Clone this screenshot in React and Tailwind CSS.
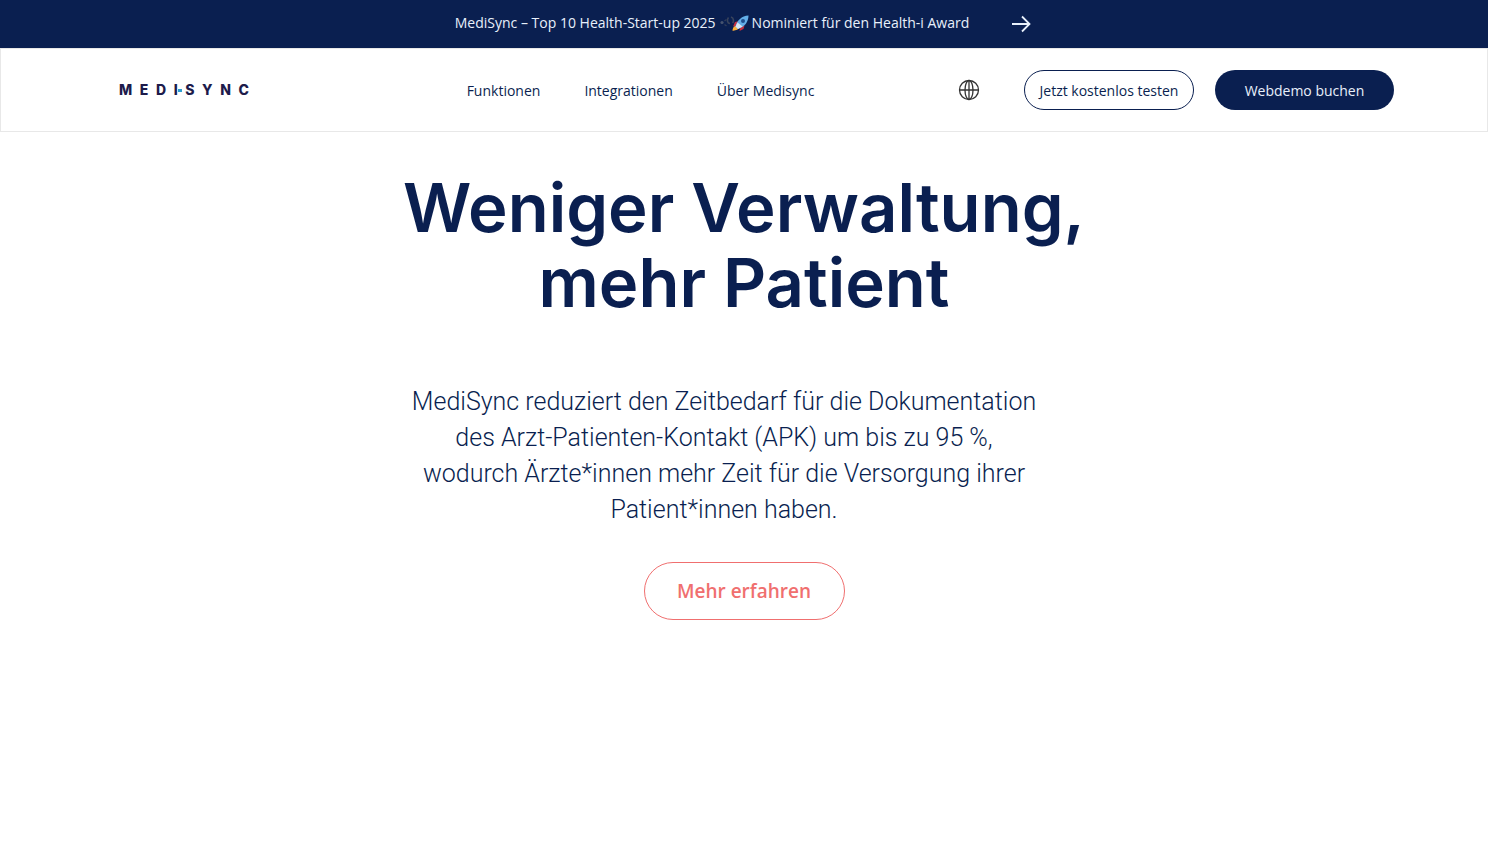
import React from 'react';

const navLinks = [
  { label: 'Funktionen', href: '#funktionen' },
  { label: 'Integrationen', href: '#integrationen' },
  { label: 'Über Medisync', href: '#ueber' },
];

const Logo = () => (
  <a href="#" aria-label="Medisync" className="flex items-center justify-between w-[130px] font-['Inter',sans-serif] font-extrabold text-sm leading-5 text-[#1d1b4b]">
    <span>M</span>
    <span>E</span>
    <span>D</span>
    <span className="relative">
      I
      <span className="absolute left-[4px] top-[9px] w-[4px] h-[3px] bg-[#2f9fd0]"></span>
    </span>
    <span>S</span>
    <span>Y</span>
    <span>N</span>
    <span>C</span>
  </a>
);

const Rocket = () => (
  <svg viewBox="0 0 32 16" className="w-8 h-4" aria-hidden="true">
    {/* dark skin on the navy bar */}
    <circle cx="4" cy="7.5" r="1.6" fill="#46536f" />
    <path d="M6.500 6l2-1.500M6.500 9.500l2 1.500" stroke="#2f3b58" strokeWidth="1.5" />
    <path d="M10.500 2.500C8.500 5 9.500 8.500 12 8.500M13 2c3 1 3 4.500 1.500 6" fill="none" stroke="#38435c" strokeWidth="1.6" />
    {/* rocket */}
    <path d="M21.500 6l-4.500 1-2 4.500 4.500-1zM26.500 10.500l-1 3.500-4 2 1-4.500z" fill="#c62f3f" />
    <path d="M17.500 11c-2 0-3 3-3 4.700C16.500 15.700 20.500 15 20.500 13z" fill="#fbb03b" />
    <path d="M17.500 11.500C19 5.500 23.500 1 30.500 .5 30.500 7 26.500 12 20 14z" fill="#62aee8" />
    <path d="M17.500 11.500l2-4 5 4-4.500 2.500z" fill="#d8e6f5" />
    <circle cx="25" cy="6" r="2" fill="#1f4f8f" />
  </svg>
);

const Announcement = () => (
  <div className="h-12 pb-0.5 pr-0.5 bg-[#0a1f50] text-[#e8f0fb] text-sm flex items-center justify-center">
    <a href="#award" className="flex items-center">
      <span>MediSync – Top 10 Health-Start-up 2025</span>
      <span className="mx-0.5"><Rocket /></span>
      <span>Nominiert für den Health-i Award</span>
      <svg viewBox="0 0 20 18" className="ml-[42px] mt-0.5 w-5 h-[18px]" fill="none" stroke="currentColor" strokeWidth="1.8" aria-hidden="true">
        <path d="M1 9h17.500M11 1.500L18.500 9 11 16.500" />
      </svg>
    </a>
  </div>
);

const Header = () => (
  <header className="h-21 border border-[#e8e8e8] pl-[118px] pr-[93px] flex items-center justify-between text-sm">
    <Logo />
    <nav className="flex gap-11 ml-[74px] pt-0.5">
      {navLinks.map(link => (
        <a key={link.label} href={link.href}>{link.label}</a>
      ))}
    </nav>
    <div className="flex items-center">
      <button type="button" aria-label="Sprache" className="mr-[44px]">
        <svg viewBox="0 0 22 22" className="w-[22px] h-[22px]" fill="none" stroke="#333" strokeWidth="1.300" aria-hidden="true">
          <circle cx="11" cy="11" r="9.500" />
          <ellipse cx="11" cy="11" rx="4" ry="9.500" />
          <path d="M11 1.500v19M1.500 11h19" />
        </svg>
      </button>
      <button type="button" className="h-10 w-[170px] pt-0.5 rounded-full border border-[#0a1f50] mr-[21px]">
        Jetzt kostenlos testen
      </button>
      <button type="button" className="h-10 w-[179px] pt-0.5 rounded-full bg-[#0a1f50] text-[#e8f0fb]">
        Webdemo buchen
      </button>
    </div>
  </header>
);

const Hero = () => (
  <main className="flex flex-col items-center text-center pt-[38px]">
    <h1 className="font-['Inter',sans-serif] font-semibold text-[67px] leading-[75px]">
      Weniger Verwaltung,
      <br />
      mehr Patient
    </h1>
    <p className="mt-[64px] mr-10 font-['Roboto',sans-serif] font-light text-[25px] leading-9">
      MediSync reduziert den Zeitbedarf für die Dokumentation
      <br />
      des Arzt-Patienten-Kontakt (APK) um bis zu 95 %,
      <br />
      wodurch Ärzte*innen mehr Zeit für die Versorgung ihrer
      <br />
      Patient*innen haben.
    </p>
    <a href="#mehr" className="mt-[34px] h-[58px] w-[201px] rounded-full border border-[#f06f6f] text-[#f06f6f] text-[19px] font-semibold flex items-center justify-center">
      Mehr erfahren
    </a>
  </main>
);

const App = () => {
  return (
    <div className="min-h-screen bg-white pr-3 font-['Open_Sans',sans-serif] text-[#0a1f50]">
      <Announcement />
      <Header />
      <Hero />
    </div>
  );
};

export default App;
